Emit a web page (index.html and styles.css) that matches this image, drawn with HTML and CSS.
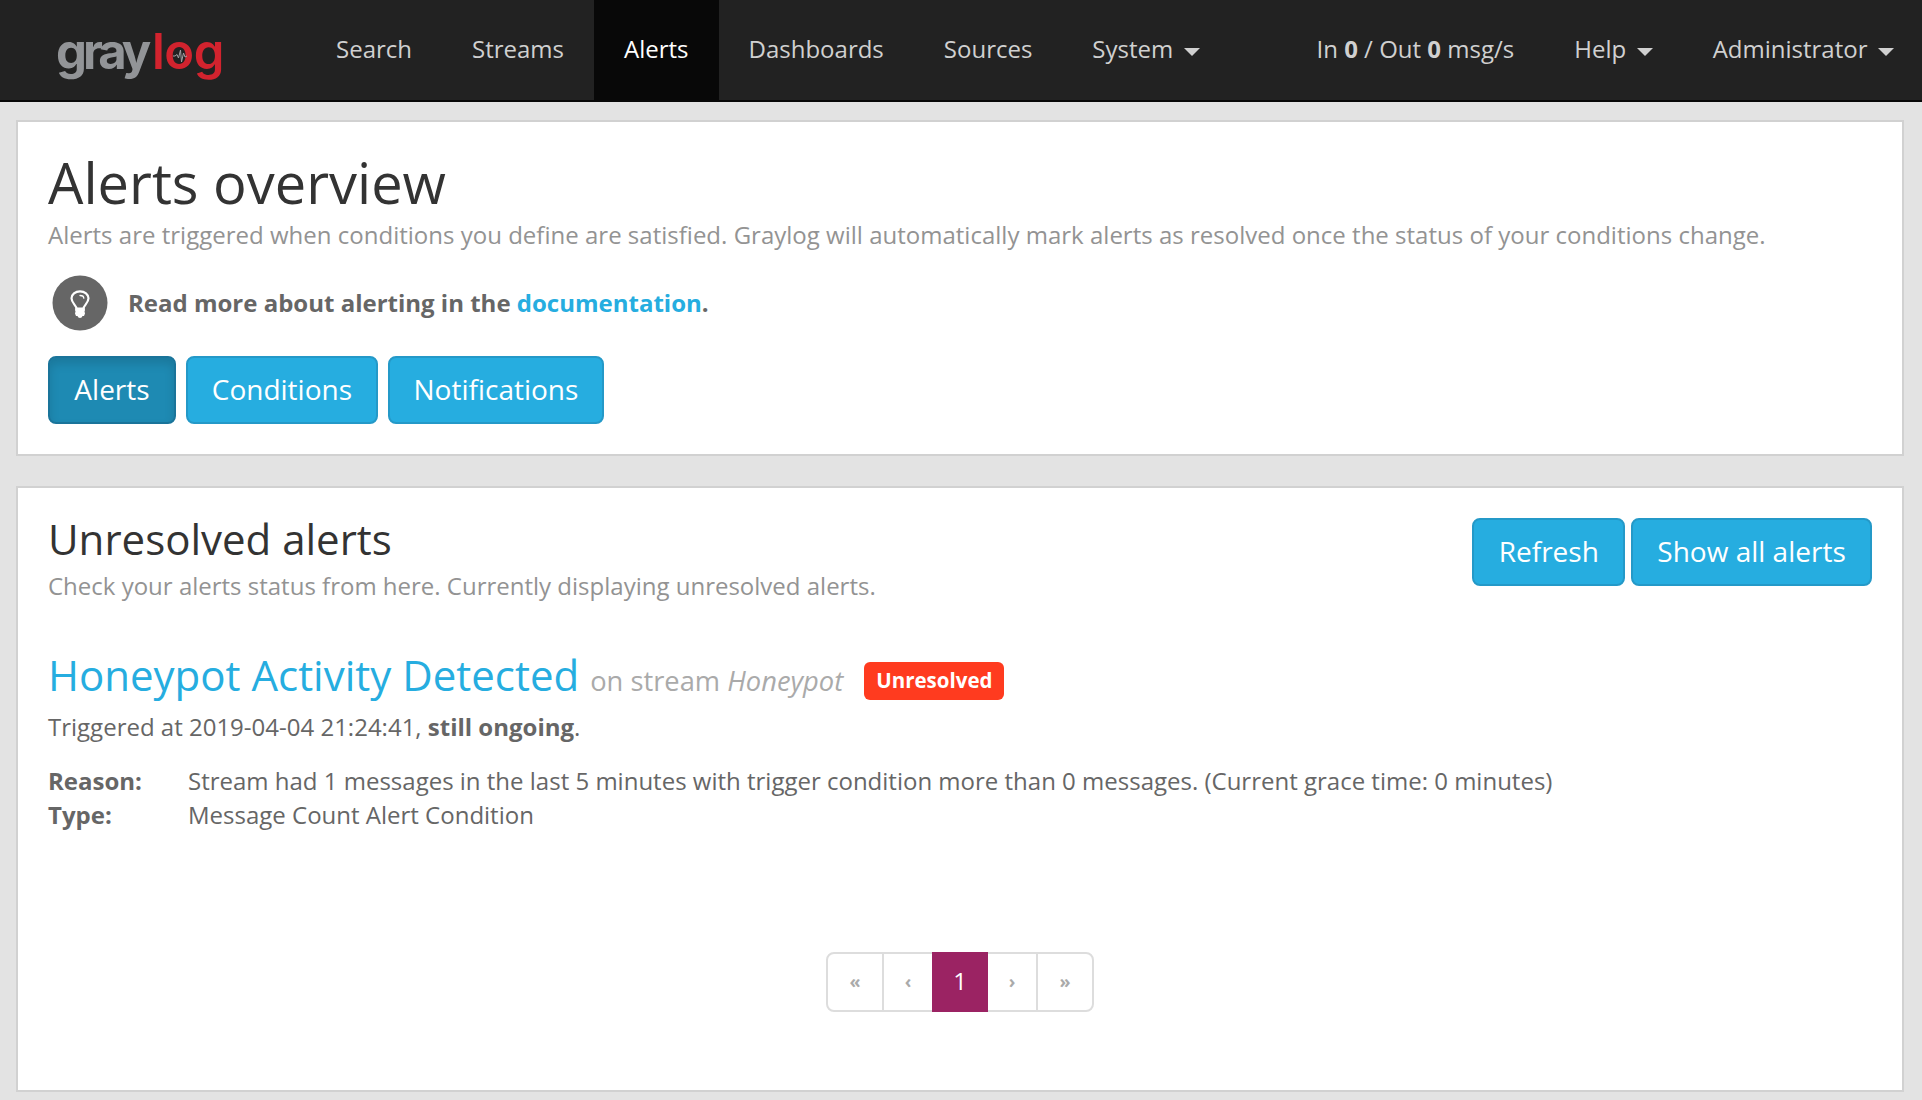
FILE: index.html
```html
<!DOCTYPE html>
<html lang="en">
<head>
<meta charset="utf-8">
<title>Graylog - Alerts overview</title>
<link rel="stylesheet" href="styles.css">
</head>
<body>
<nav class="navbar">
  <a class="brand"><span class="brand-gray">gray</span><span class="brand-log">log</span><svg class="brand-pulse" viewBox="0 0 16 16"><path d="M1 8h2l2-1.500 1.500 3.500 2-8 1 12 2-9 1.500 4 2-1" fill="none" stroke="#a0a1a4" stroke-width="1"/></svg></a>
  <ul class="nav">
    <li>Search</li>
    <li>Streams</li>
    <li class="active">Alerts</li>
    <li>Dashboards</li>
    <li>Sources</li>
    <li>System<span class="caret"></span></li>
  </ul>
  <ul class="nav nav-right">
    <li>In <b>0</b> / Out <b>0</b> msg/s</li>
    <li>Help<span class="caret"></span></li>
    <li>Administrator<span class="caret"></span></li>
  </ul>
</nav>
<main>
  <section class="card overview">
    <h1>Alerts overview</h1>
    <p class="description">Alerts are triggered when conditions you define are satisfied. Graylog will automatically mark alerts as resolved once the status of your conditions change.</p>
    <div class="support">
      <svg class="bulb" viewBox="0 0 56 56">
        <circle cx="28" cy="28" r="27.500" fill="#666"/>
        <path d="M24.500 33.500c0-3-5-5.500-5-10.200a8.500 7 0 0 1 17 0c0 4.700-5 7.200-5 10.200z" fill="none" stroke="#fff" stroke-width="2.200"/>
        <path d="M28 20.500c2.300 0 3.800 1 3.800 2.700" fill="none" stroke="#fff" stroke-width="1.300" stroke-linecap="round"/>
        <path d="M23.500 33h9l.500 2-.500 1.500.500 2-1 2.500h-1.500q-.500 2-2.500 2t-2.500-2H24l-1-2.500.500-2-.500-1.500z" fill="#fff"/>
      </svg>
      <span>Read more about alerting in the <a>documentation</a>.</span>
    </div>
    <div class="tabs">
      <button class="btn pressed">Alerts</button>
      <button class="btn">Conditions</button>
      <button class="btn">Notifications</button>
    </div>
  </section>
  <section class="card alerts">
    <header class="alerts-head">
      <div>
        <h2>Unresolved alerts</h2>
        <p class="description">Check your alerts status from here. Currently displaying unresolved alerts.</p>
      </div>
      <div class="actions">
        <button class="btn">Refresh</button>
        <button class="btn">Show all alerts</button>
      </div>
    </header>
    <article class="alert">
      <h3><a>Honeypot Activity Detected</a> <small>on stream <em>Honeypot</em></small><span class="label">Unresolved</span></h3>
      <p>Triggered at 2019-04-04 21:24:41, <b>still ongoing</b>.</p>
      <dl>
        <dt>Reason:</dt>
        <dd>Stream had 1 messages in the last 5 minutes with trigger condition more than 0 messages. (Current grace time: 0 minutes)</dd>
        <dt>Type:</dt>
        <dd>Message Count Alert Condition</dd>
      </dl>
    </article>
    <ul class="pagination">
      <li>«</li>
      <li class="step">‹</li>
      <li class="current">1</li>
      <li class="step">›</li>
      <li>»</li>
    </ul>
  </section>
</main>
</body>
</html>
```
FILE: styles.css
```css
* { box-sizing: border-box; }

body {
  margin: 0;
  min-height: 1100px;
  background: #e3e3e3;
  color: #666;
  font: 24px/34px "Open Sans", sans-serif;
}

h1, h2, h3, p, ul, dl, dd { margin: 0; padding: 0; font-weight: 400; }
ul { list-style: none; }
a { color: #26ade0; }

.navbar {
  display: flex;
  height: 102px;
  background: #222;
  border-bottom: 2px solid #080808;
}

.brand {
  position: relative;
  display: flex;
  width: 306px;
  padding-left: 56px;
  font: 49px/104px Inter, sans-serif;
  white-space: nowrap;
}
.brand-gray { width: 96px; color: #929497; font-weight: 700; letter-spacing: -4px; }
.brand-log { color: #d2232e; font-weight: 600; letter-spacing: -.5px; }
.brand-pulse { position: absolute; left: 172px; top: 48px; width: 16px; height: 16px; }

.nav { display: flex; }
.nav li {
  display: flex;
  align-items: center;
  height: 100px;
  padding: 0 30px 3px;
  color: #d0d0d0;
  white-space: pre;
}
.nav .active { background: #080808; color: #fff; }
.nav-right { margin-left: auto; margin-right: -2px; }
.caret {
  margin: 7px 0 0 11px;
  border: 8px solid transparent;
  border-top-color: currentColor;
  border-bottom: 0;
}
.nav-right .caret { margin-left: 10.500px; }

main {
  display: flex;
  flex-direction: column;
  gap: 30px;
  padding: 18px 18px 8px 16px;
}
.card {
  padding: 30px;
  background: #fff;
  border: 2px solid #d1d1d1;
}
.overview { height: 336px; }
.alerts { height: 606px; }

h1 { color: #333; font-size: 56px; line-height: 60px; }
h2 { color: #333; font-size: 42px; line-height: 42px; }
.description { margin-top: 6px; color: #939393; letter-spacing: .01px; }
.alerts .description { margin-top: 9px; letter-spacing: 0; }

.support {
  display: flex;
  align-items: center;
  gap: 20px;
  margin: 23px 0 25px 4px;
  font-weight: 700;
}
.bulb { width: 56px; height: 56px; }

.tabs { display: flex; gap: 10px; }
.btn {
  height: 68px;
  padding: 0 23.75px 3px;
  border: 2px solid #2499c8;
  border-radius: 8px;
  background: #26ade0;
  color: #fff;
  font: 28px/38px "Open Sans", sans-serif;
}
.pressed {
  width: 128px;
  background: #1e8ab3;
  border-color: #1a749a;
  box-shadow: inset 0 6px 10px rgba(0, 0, 0, .125);
}

.alerts-head { display: flex; justify-content: space-between; height: 86px; }
.actions { display: flex; align-items: flex-start; gap: 6px; }
.actions .btn { padding: 0 24.25px 3px; }

.alert { margin-top: 47px; }
h3 { display: flex; align-items: baseline; height: 48px; font-size: 42px; line-height: 48px; }
small { margin-left: 11px; color: #aaa; font-size: 27.3px; }
.label {
  align-self: flex-start;
  height: 38px;
  margin: 11px 0 0 21px;
  padding: 0 12px;
  border-radius: 6px;
  background: #ff3b1f;
  color: #fff;
  font-size: 20.5px;
  font-weight: 700;
  line-height: 36px;
}
.alert p { margin-top: 11px; }
dl {
  display: grid;
  grid-template-columns: 140px 1fr;
  margin-top: 20px;
}
dt { font-weight: 700; }

.pagination {
  display: flex;
  width: 268px;
  height: 60px;
  margin: 120px auto 0;
  border: 2px solid #ddd;
  border-radius: 8px;
}
.pagination li {
  width: 54px;
  color: #aaa;
  font-size: 18px;
  font-weight: 700;
  line-height: 55px;
  text-align: center;
}
.pagination .step { width: 50px; border-left: 2px solid #ddd; }
.pagination .current {
  width: 56px;
  height: 60px;
  margin: -2px 0;
  background: #9b2363;
  color: #fff;
  font-size: 24px;
  font-weight: 400;
  line-height: 58px;
}
.pagination .current + .step { width: 50px; border-left: 0; border-right: 2px solid #ddd; }
```
